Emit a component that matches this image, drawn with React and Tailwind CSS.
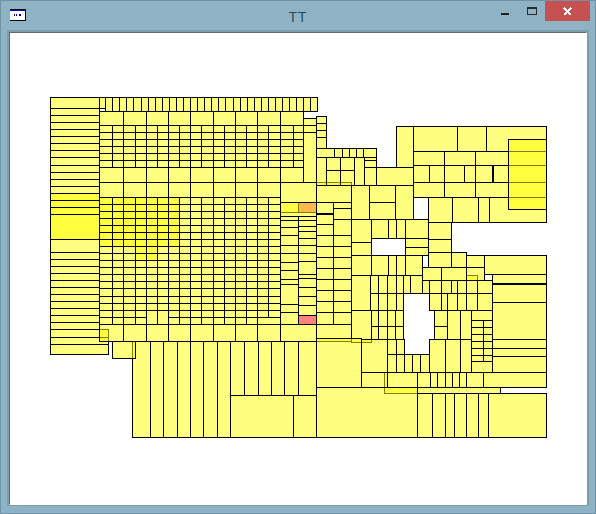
const Y = 1; // bright yellow cell (two coats)
const cells = [];
const add = (x0, y0, x1, y1, kind) => cells.push([x0, y0, x1, y1, kind]);
const col = (x0, x1, ys, kindOf) => {
  for (let i = 0; i < ys.length - 1; i++) add(x0, ys[i], x1, ys[i + 1], kindOf ? kindOf(ys[i], x0) : undefined);
};
const row = (y0, y1, xs) => {
  for (let i = 0; i < xs.length - 1; i++) add(xs[i], y0, xs[i + 1], y1);
};

// left column
col(50, 99, [97,108,115,122,129,136,143,150,157,165,172,179,186,193,200,207,214,239,252,259,266,273,280,287,294,301,308,315,322,329], (y) => (y >= 193 && y < 239 ? Y : undefined));
col(50, 108, [329,337,344,354]);

// top strip
add(99, 97, 105, 108);
row(97, 111, [105,112,119,126,133,141,148,155,162,169,176,183,190,197,204,211,218,225,233,240,247,254,261,268,275,282,289,296,303,310,317]);

// large rows
const big = [99,123,146,168,190,213,235,257,280,303];
const big2 = [99,123,146,168,190,213,235,257,280];
row(111, 125, big);
row(167, 182, big);
row(182, 197, big2);
row(324, 341, big2);

// grids
const gx = [99,112,123,135,146,157,168,179,190,201,213,224,235,246,257,268,280,293,303];
const gy1 = [125,132,139,146,153,160,167];
for (let i = 0; i < gx.length - 1; i++) col(gx[i], gx[i + 1], gy1);
const gx2 = gx.slice(0, 17);
const gy2 = [197,204,211,218,225,232,239,246,253,260,267,274,281,288,296,303,310,317,324];
for (let i = 0; i < gx2.length - 1; i++) {
  const x0 = gx2[i];
  const x1 = gx2[i + 1];
  if (x0 === 257 || x0 === 268) {
    col(x0, x1, gy2.slice(0, -1));
  } else if (x0 === 146 || x0 === 157) {
    col(x0, x1, gy2.slice(0, -2).concat([324]), (y) => bright(x0, y));
  } else {
    col(x0, x1, gy2, (y) => bright(x0, y));
  }
}
add(257, 317, 280, 324);
function bright(x, y) {
  if (x < 179 && y < 246) return Y;
  if (x >= 135 && x < 157 && y < 260) return Y;
  return undefined;
}

// column beside upper grid
col(303, 316, [118,125,132,182]);

// middle column early cells
add(316, 182, 351, 202);
col(316, 326, [116,123,130,137,148]);
row(148, 157, [316,334,342,349,356,363,376]);
add(316, 157, 326, 185);
col(326, 340, [157,170,185]);
col(340, 354, [157,170,185]);
add(354, 157, 364, 185);
col(364, 376, [157,160,167,185]);
add(376, 167, 413, 185);
add(396, 126, 413, 167);

// cells in the 280-316 column
add(280, 182, 316, 202);
add(280, 202, 298, 212);
add(298, 202, 316, 212, "o");
add(280, 202, 316, 216);
col(280, 298, [216,220,227,235,245,253,262,270,279,284,304,312,324]);
col(298, 316, [216,220,226,231,238,245,253,261,274,278,287,296,305,315]);
add(298, 315, 316, 324, "p");
add(280, 324, 316, 341);

// 316-351 column
add(351, 185, 369, 219);
col(369, 395, [185,202,219]);
add(395, 185, 413, 219);
col(316, 333, [202,213]);
col(316, 333, [214,224,235,246,257,268,279,290,301,312,324]);
col(333, 351, [202,208,219,235,246,257,268,279,290,301,312,324]);
add(316, 324, 351, 341);
add(351, 310, 371, 342);
col(351, 371, [219,242,255,275]);
col(351, 370, [275,310]);

// centre
row(219, 238, [371,388,396,405,428]);
col(405, 428, [238,247,255]);
row(255, 275, [371,388,396,405,422]);
add(466, 275, 477, 293);
row(275, 293, [370,378,387,396,403,410,422]);
row(280, 293, [422,429,441,451,457,466]);
add(477, 280, 492, 293);
row(293, 310, [370,378,387,396,403]);
row(293, 310, [429,441,447,457,466,477,492]);
row(310, 326, [371,378,387,395,403]);
row(326, 339, [371,378,387,395,403]);
col(434, 447, [310,326,339]);
add(447, 310, 460, 339);
add(460, 310, 471, 339);
add(471, 310, 492, 320);
const gg = [320,327,334,341,348,355,361];
col(471, 483, gg);
col(483, 492, gg);
add(471, 361, 492, 372);
row(339, 372, [429,445,460,471]);
row(339, 354, [387,396,404]);
row(354, 372, [387,396,404,412,420,429]);
add(466, 255, 484, 267);
row(252, 267, [428,451,466]);
row(267, 280, [422,441,466,484]);
col(428, 451, [222,239,252]);
add(484, 255, 546, 274);
add(492, 274, 546, 283);
col(492, 546, [284,302,339,348,356,372]);

// top-right block
row(126, 151, [413,457,486,546]);
row(151, 165, [413,444,475,508,546]);
row(165, 182, [413,429,444,464,475,492]);
row(165, 182, [493,508,546]);
row(182, 197, [413,444,475,508,546]);
row(197, 222, [428,452,478,489,546]);
add(508, 139, 546, 209);

// bottom
add(384, 372, 417, 393);
row(341, 437, [132,150,163,177,190,203,217,230]);
add(112, 341, 135, 358);
row(341, 395, [230,244,258,271,284,298,316]);
row(395, 437, [230,293,316]);
add(316, 338, 361, 387);
add(361, 339, 387, 372);
row(372, 387, [361,387]);
row(372, 387, [417,430,437,445,452,459,466,483,546]);
add(316, 387, 417, 437);
add(417, 387, 500, 393);
row(393, 437, [417,432,445,454,466,478,488,546]);

function Treemap() {
  return (
    <svg className="block" width="576" height="471" viewBox="10 33 576 471" shapeRendering="crispEdges">
      {cells.map(([x0, y0, x1, y1, k], i) => {
        const x = x0 + 0.5;
        const y = y0 + 0.5;
        const w = x1 - x0;
        const h = y1 - y0;
        let fill = "#ffff00";
        let op = 0.5;
        if (k === Y) op = 0.75;
        if (k === "o") { fill = "#ff719a"; op = 1; }
        if (k === "p") { fill = "#ff8080"; op = 1; }
        return <rect key={i} x={x} y={y} width={w} height={h} fill={fill} fillOpacity={op} stroke="#000" strokeWidth="1" />;
      })}
    </svg>
  );
}

function AppIcon() {
  return (
    <svg width="16" height="12" viewBox="0 0 16 12" shapeRendering="crispEdges" className="block">
      <rect width="16" height="12" fill="#fff" />
      <rect width="16" height="1" fill="#000" />
      <rect y="1" width="16" height="1" fill="#0000c8" />
      <rect y="11" width="16" height="1" fill="#000" />
      <rect x="15" width="1" height="12" fill="#000" />
      <rect x="4" y="5" width="1" height="2" fill="#000080" />
      <rect x="6" y="5" width="1" height="2" fill="#000080" />
      <rect x="9" y="5" width="2" height="2" fill="#000080" />
    </svg>
  );
}

export default function App() {
  return (
    <div className="w-[596px] h-[514px] bg-[#8eb3c5] border border-[#6f93a6] flex flex-col overflow-hidden">
      <div className="h-[29px] shrink-0 grid grid-cols-[1fr_auto_1fr] items-start">
        <div className="pl-[9px] pt-[8px]"><AppIcon /></div>
        <div className="pt-[5px] text-[15px] leading-[20px] text-[#27465a] tracking-[1px]" style={{ fontFamily: '"Open Sans", sans-serif' }}>TT</div>
        <div className="flex justify-end items-start pr-[5px]">
          <div className="w-[8px] h-[2px] bg-[#222] mt-[12px] mr-[18px]" />
          <div className="w-[10px] h-[8px] border border-t-2 border-[#2a2a2a] mt-[6px] mr-[8px]" />
          <div className="w-[45px] h-[20px] bg-[#c75050] flex items-center justify-center">
            <svg width="9" height="9" viewBox="0 0 9 9" shapeRendering="crispEdges">
              <path d="M1 1 L8 8 M8 1 L1 8" stroke="#fff" strokeWidth="2" />
            </svg>
          </div>
        </div>
      </div>
      <div className="ml-[6px] w-[582px] h-[476px] border-2 border-b border-[#7c9dae]">
        <div className="w-full h-full border-l border-t border-l-[#696969] border-t-[#696969] border-r border-b border-r-white border-b-white bg-white">
          <Treemap />
        </div>
      </div>
    </div>
  );
}
